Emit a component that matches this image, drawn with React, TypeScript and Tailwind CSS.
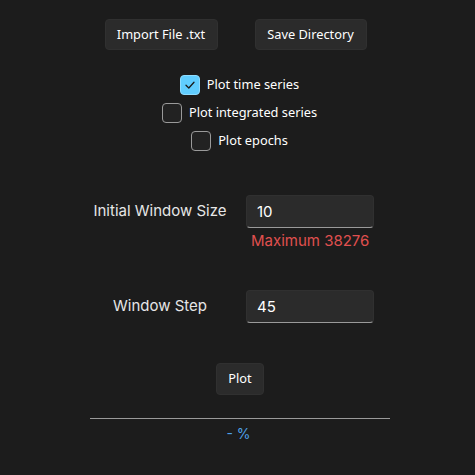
import { useState } from "react";

function Check({ label, checked, onToggle }: { label: string; checked: boolean; onToggle: () => void }) {
  return (
    <label className="flex items-center gap-[7px] h-[28px] cursor-pointer select-none" onClick={onToggle}>
      <span
        className={
          checked
            ? "w-[20px] h-[20px] rounded-[4px] bg-[#60cdff] border border-[#8fdcff] flex items-center justify-center"
            : "w-[20px] h-[20px] rounded-[4px] border border-[#9a9a9a] bg-[#222222]"
        }
      >
        {checked && (
          <svg width="12" height="12" viewBox="0 0 12 12" fill="none">
            <path d="M2 6.3 L4.8 9 L10 3.2" stroke="#1a1a1a" strokeWidth="1.3" strokeLinecap="round" strokeLinejoin="round" />
          </svg>
        )}
      </span>
      <span className="text-[12.8px] text-white font-['Noto_Sans',sans-serif]">{label}</span>
    </label>
  );
}

export default function App() {
  const [opts, setOpts] = useState({ time: true, integrated: false, epochs: false });
  const [win, setWin] = useState("10");
  const [step, setStep] = useState("45");

  const btn =
    "h-[31px] rounded-[4px] bg-[#2b2b2b] border border-[#303030] text-white text-[12.8px] font-['Noto_Sans',sans-serif]";
  const label = "w-[150px] text-center text-[15px] text-[#e6e6e6] font-['Inter',sans-serif]";
  const field =
    "w-[128px] h-[33px] rounded-[4px] bg-[#2b2b2b] border border-[#303030] border-b-[#9a9a9a] px-[10px] text-[15px] text-white outline-none font-['Inter',sans-serif]";

  return (
    <div className="w-[475px] h-[475px] bg-[#1c1c1c] text-white overflow-hidden">
      <div className="flex justify-center gap-[37px] pt-[19px] pr-[4px]">
        <button className={btn + " w-[113px]"}>Import File .txt</button>
        <button className={btn + " w-[112px]"}>Save Directory</button>
      </div>

      <div className="flex flex-col items-center mt-[21px] pl-[4px]">
        <Check label="Plot time series" checked={opts.time} onToggle={() => setOpts({ ...opts, time: !opts.time })} />
        <Check label="Plot integrated series" checked={opts.integrated} onToggle={() => setOpts({ ...opts, integrated: !opts.integrated })} />
        <Check label="Plot epochs" checked={opts.epochs} onToggle={() => setOpts({ ...opts, epochs: !opts.epochs })} />
      </div>

      <div className="ml-[85px] mt-[40px] flex items-center gap-[11px]">
        <div className={label}>Initial Window Size</div>
        <input value={win} onChange={(e) => setWin(e.target.value)} className={field} />
      </div>
      <div className="ml-[251px] mt-[3px] text-[15px] leading-[20px] text-[#e0504f] font-['Inter',sans-serif]">
        Maximum 38276
      </div>

      <div className="ml-[85px] mt-[39px] flex items-center gap-[11px]">
        <div className={label}>Window Step</div>
        <input value={step} onChange={(e) => setStep(e.target.value)} className={field} />
      </div>

      <div className="flex justify-center mt-[40px] pl-[5px]">
        <button className={btn + " w-[48px] h-[32px]"}>Plot</button>
      </div>

      <div className="mx-[90px] w-[300px] mt-[23px] h-px bg-[#9a9a9a]" />
      <div className="text-center mt-[6px] pl-[2px] text-[14px] leading-[18px] text-[#4ea1e8] font-['Inter',sans-serif]">
        - %
      </div>
    </div>
  );
}
